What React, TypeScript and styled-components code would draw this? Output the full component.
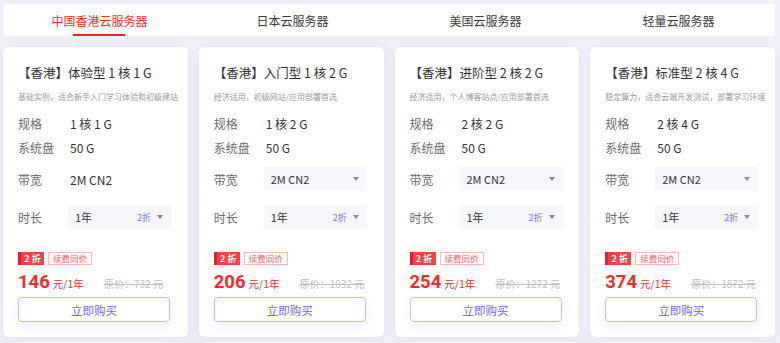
import React from "react";
import styled, { createGlobalStyle } from "styled-components";

type Plan = {
  title: string;
  desc: string;
  spec: string;
  disk: string;
  bwSelect: boolean;
  price: number;
  orig: number;
};

const plans: Plan[] = [
  {
    title: "【香港】体验型 1 核 1 G",
    desc: "基础实例，适合新手入门学习体验和初级建站",
    spec: "1 核 1 G",
    disk: "50 G",
    bwSelect: false,
    price: 146,
    orig: 732,
  },
  {
    title: "【香港】入门型 1 核 2 G",
    desc: "经济适用，初级网站/应用部署首选",
    spec: "1 核 2 G",
    disk: "50 G",
    bwSelect: true,
    price: 206,
    orig: 1032,
  },
  {
    title: "【香港】进阶型 2 核 2 G",
    desc: "经济适用，个人博客站点/应用部署首选",
    spec: "2 核 2 G",
    disk: "50 G",
    bwSelect: true,
    price: 254,
    orig: 1272,
  },
  {
    title: "【香港】标准型 2 核 4 G",
    desc: "稳定算力，适合云端开发测试，部署学习环境",
    spec: "2 核 4 G",
    disk: "50 G",
    bwSelect: true,
    price: 374,
    orig: 1872,
  },
];

const tabs = ["中国香港云服务器", "日本云服务器", "美国云服务器", "轻量云服务器"];

const App: React.FC = () => {
  return (
    <>
      <GlobalStyle />
      <Page>
        <TabBar>
          {tabs.map((t, i) => (
            <Tab key={t} $active={i === 0}>
              {t}
            </Tab>
          ))}
        </TabBar>
        <CardGrid>
          {plans.map((p) => (
            <Card key={p.title}>
              <Title>{p.title}</Title>
              <Desc>{p.desc}</Desc>
              <Specs>
                <SpecRow>
                  <Label>规格</Label>
                  <Value>{p.spec}</Value>
                </SpecRow>
                <SpecRow>
                  <Label>系统盘</Label>
                  <Value>{p.disk}</Value>
                </SpecRow>
              </Specs>
              <Options>
                <OptionRow>
                  <Label>带宽</Label>
                  {p.bwSelect ? (
                    <Select>
                      <span>2M CN2</span>
                      <Caret />
                    </Select>
                  ) : (
                    <Value>2M CN2</Value>
                  )}
                </OptionRow>
                <OptionRow>
                  <Label>时长</Label>
                  <Select>
                    <span>1年</span>
                    <SelectRight>
                      <Discount>2折</Discount>
                      <Caret />
                    </SelectRight>
                  </Select>
                </OptionRow>
              </Options>
              <Badges>
                <RedBadge>2 折</RedBadge>
                <OutlineBadge>续费同价</OutlineBadge>
              </Badges>
              <PriceRow>
                <PriceMain>
                  <PriceNum>{p.price}</PriceNum>
                  <PriceUnit>元/1年</PriceUnit>
                </PriceMain>
                <Orig>原价：{p.orig} 元</Orig>
              </PriceRow>
              <BuyButton>立即购买</BuyButton>
            </Card>
          ))}
        </CardGrid>
      </Page>
    </>
  );
};

const GlobalStyle = createGlobalStyle`
  html, body {
    margin: 0;
    padding: 0;
    background: #efeff9;
    font-family: "Noto Sans CJK SC", "Noto Sans", sans-serif;
  }
`;

const Page = styled.div`
  width: 780px;
  height: 343px;
  box-sizing: border-box;
  padding: 4px 5px 0 3px;
  background: #efeff9;
  overflow: hidden;
`;

const TabBar = styled.div`
  height: 32px;
  background: #fff;
  border-radius: 4px;
  display: grid;
  grid-template-columns: repeat(4, minmax(0, 1fr));
`;

const Tab = styled.div<{ $active: boolean }>`
  position: relative;
  display: flex;
  align-items: center;
  justify-content: center;
  font-size: 12px;
  color: ${(p) => (p.$active ? "#ff2d2d" : "#3a3a3a")};

  &::after {
    content: "";
    display: ${(p) => (p.$active ? "block" : "none")};
    position: absolute;
    left: 70px;
    width: 52px;
    bottom: 0;
    height: 2px;
    background: #ff1a1a;
  }
`;

const CardGrid = styled.div`
  margin-top: 11px;
  display: grid;
  grid-template-columns: repeat(4, minmax(0, 1fr));
  gap: 11px;
`;

const Card = styled.div`
  height: 290px;
  box-sizing: border-box;
  background: #fff;
  border-radius: 6px;
  padding: 17px 14px 0 15px;
  box-shadow: 0 2px 10px rgba(120, 120, 200, 0.08);
  overflow: hidden;
`;

const Title = styled.div`
  font-size: 12.5px;
  line-height: 18px;
  color: #333;
  white-space: nowrap;
`;

const Desc = styled.div`
  margin-top: 9px;
  font-size: 8px;
  line-height: 12px;
  color: #9a9a9a;
  white-space: nowrap;
`;

const Specs = styled.div`
  margin-top: 8px;
`;

const SpecRow = styled.div`
  height: 24px;
  display: flex;
  align-items: center;
`;

const Label = styled.span`
  width: 52px;
  flex-shrink: 0;
  font-size: 12px;
  color: #6a6a6a;
`;

const Value = styled.span`
  font-size: 12px;
  color: #333;
`;

const Options = styled.div`
  margin-top: 8px;
  display: flex;
  flex-direction: column;
  gap: 14px;
`;

const OptionRow = styled.div`
  height: 24px;
  display: flex;
  align-items: center;
`;

const Select = styled.div`
  margin-left: -2px;
  width: 103px;
  height: 24px;
  box-sizing: border-box;
  padding: 0 8px 0 7px;
  background: #f6f7fb;
  display: flex;
  align-items: center;
  justify-content: space-between;
  font-size: 11px;
  color: #333;
`;

const SelectRight = styled.span`
  display: flex;
  align-items: center;
  gap: 6px;
`;

const Discount = styled.span`
  font-size: 9px;
  color: #7a78ec;
`;

const Caret = styled.span`
  width: 0;
  height: 0;
  border-left: 3.5px solid transparent;
  border-right: 3.5px solid transparent;
  border-top: 4px solid #888;
`;

const Badges = styled.div`
  margin-top: 23px;
  display: flex;
  gap: 4px;
  height: 13px;
`;

const RedBadge = styled.span`
  width: 26px;
  box-sizing: border-box;
  padding-left: 3px;
  background: linear-gradient(90deg, #d9212f 0 3px, #f7404a 3px);
  color: #fff;
  font-size: 9px;
  font-weight: 700;
  line-height: 13px;
  text-align: center;
`;

const OutlineBadge = styled.span`
  box-sizing: border-box;
  padding: 0 4px;
  border: 1px solid #ffb8b8;
  color: #f25c5c;
  font-size: 8.5px;
  line-height: 11px;
`;

const PriceRow = styled.div`
  margin-top: 6px;
  height: 20px;
  display: flex;
  align-items: baseline;
`;

const PriceMain = styled.div`
  width: 86px;
  flex-shrink: 0;
  display: flex;
  align-items: baseline;
  gap: 3px;
  color: #f52a2a;
`;

const PriceNum = styled.span`
  font-family: "Roboto", "Noto Sans", sans-serif;
  font-size: 18.5px;
  font-weight: 700;
`;

const PriceUnit = styled.span`
  font-size: 10.5px;
`;

const Orig = styled.span`
  font-size: 10px;
  color: #bdbdbd;
  text-decoration: line-through;
  white-space: nowrap;
`;

const BuyButton = styled.button`
  display: block;
  margin-top: 6px;
  width: 152px;
  height: 25px;
  box-sizing: border-box;
  background: #fff;
  border: 1px solid #bdbdf2;
  border-radius: 4px;
  color: #6d6ddf;
  font-family: "Noto Sans CJK SC", sans-serif;
  font-size: 11.5px;
  box-shadow: 0 5px 12px rgba(110, 110, 220, 0.1);
  cursor: pointer;
`;

export default App;
